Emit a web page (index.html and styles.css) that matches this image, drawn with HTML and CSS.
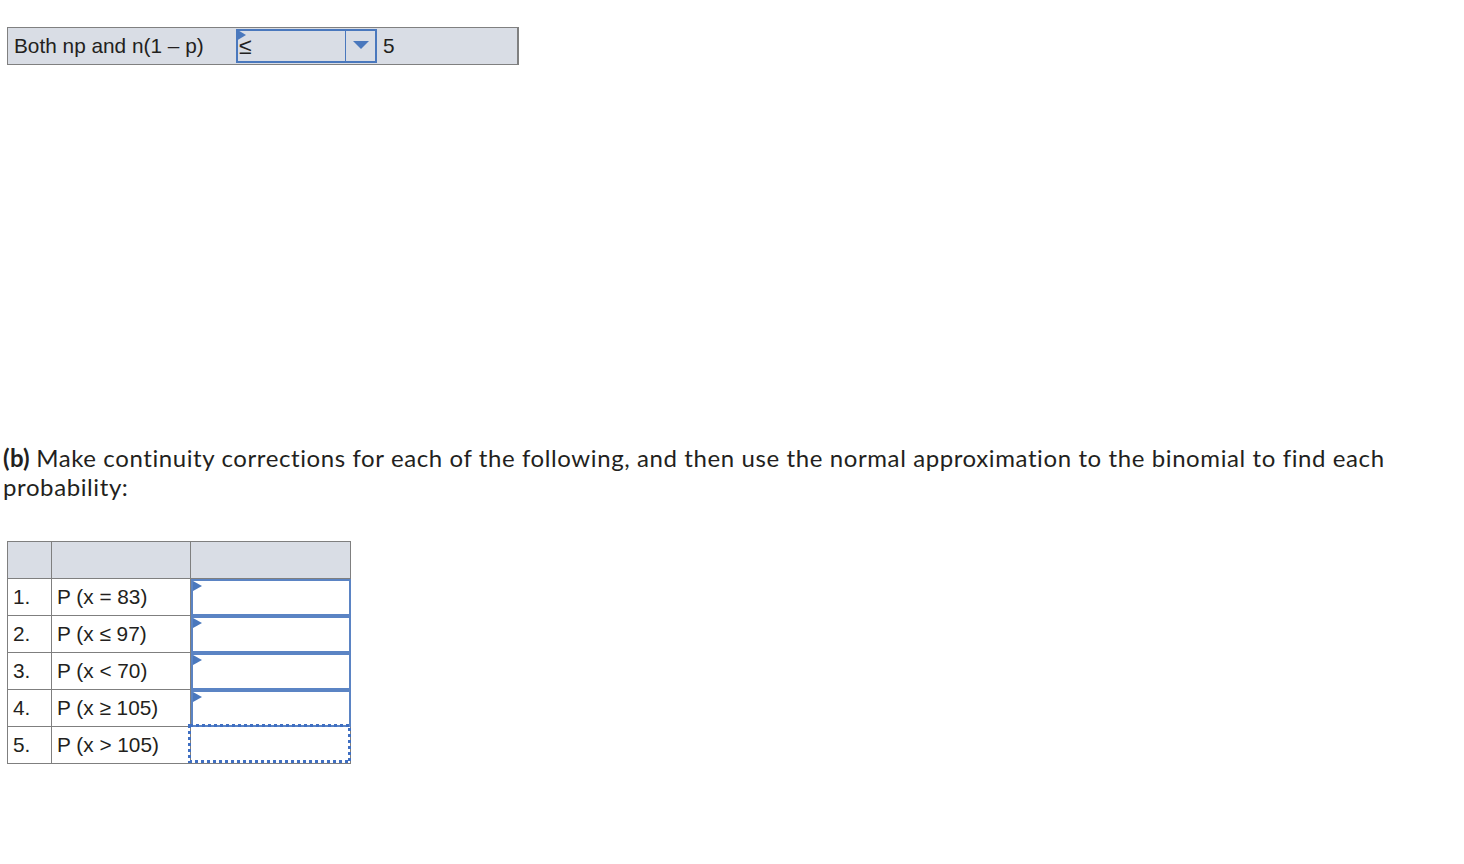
FILE: index.html
```html
<!DOCTYPE html>
<html>
<head>
<meta charset="utf-8">
<link rel="stylesheet" href="styles.css">
</head>
<body>
<div class="page">
  <div class="cond-row">
    <div class="cond-label">Both np and n(1 – p)</div>
    <div class="cond-select">
      <span class="flag"></span>
      <span class="sel-value">≤</span>
      <span class="sel-btn"><span class="caret"></span></span>
    </div>
    <div class="cond-value">5</div>
  </div>

  <p class="question"><b>(b) </b>Make continuity corrections for each of the following, and then use the normal approximation to the binomial to find each probability:</p>

  <table class="prob-table">
    <colgroup>
      <col class="c-num"><col class="c-expr"><col class="c-ans">
    </colgroup>
    <thead>
      <tr><th></th><th></th><th></th></tr>
    </thead>
    <tbody>
      <tr><td>1.</td><td>P (x = 83)</td><td class="ans"><div class="input"><span class="flag"></span></div></td></tr>
      <tr><td>2.</td><td>P (x ≤ 97)</td><td class="ans"><div class="input"><span class="flag"></span></div></td></tr>
      <tr><td>3.</td><td>P (x &lt; 70)</td><td class="ans"><div class="input"><span class="flag"></span></div></td></tr>
      <tr><td>4.</td><td>P (x ≥ 105)</td><td class="ans"><div class="input"><span class="flag"></span></div></td></tr>
      <tr><td>5.</td><td>P (x &gt; 105)</td><td class="ans"><div class="input dotted"><svg class="dots" width="163" height="39" viewBox="0 0 163 39"><rect x="1.5" y="1.5" width="160" height="36" fill="none" stroke="#3f6fc2" stroke-width="3" stroke-dasharray="3 3" shape-rendering="crispEdges"/></svg></div></td></tr>
    </tbody>
  </table>
</div>
</body>
</html>
```

FILE: styles.css
```css
html, body {
  margin: 0;
  padding: 0;
  background: #fff;
}

.page {
  padding: 27px 0 0 0;
  color: #231f20;
}

.cond-row {
  margin-left: 7px;
  width: 512px;
  height: 38px;
  box-sizing: border-box;
  border: 1px solid #808080;
  border-right-width: 2px;
  background: #d9dde5;
  display: flex;
  align-items: stretch;
  font-family: "Liberation Sans", Arial, sans-serif;
  font-size: 20.8px;
}

.cond-label {
  width: 228px;
  padding-left: 6px;
  box-sizing: border-box;
  display: flex;
  align-items: center;
}

.cond-select {
  position: relative;
  width: 141px;
  margin: 1px 0;
  box-sizing: border-box;
  border: 2px solid #4a78bd;
  display: flex;
  align-items: center;
}

.sel-value {
  flex: 1;
  padding-left: 1px;
  font-size: 23px;
}

.sel-btn {
  width: 29px;
  align-self: stretch;
  border-left: 1px solid #4a78bd;
  display: flex;
  align-items: center;
  justify-content: center;
}

.caret {
  width: 0;
  height: 0;
  border-left: 8px solid transparent;
  border-right: 8px solid transparent;
  border-top: 8px solid #4a78bd;
  margin-top: -2px;
}

.cond-value {
  flex: 1;
  padding-left: 6px;
  display: flex;
  align-items: center;
}

.flag {
  position: absolute;
  left: -2px;
  top: -2px;
  width: 0;
  height: 0;
  border-top: 5px solid transparent;
  border-bottom: 5px solid transparent;
  border-left: 9px solid #4a78bd;
}

.cond-select .flag {
  top: -2px;
  border-top-width: 6px;
  border-bottom-width: 6px;
  border-left-width: 10px;
}

.question {
  width: 1420px;
  margin: 378px 0 0 3px;
  font-family: Lato, "Open Sans", sans-serif;
  font-size: 24px;
  line-height: 29px;
  letter-spacing: 0.6px;
  color: #231f20;
}

.question b {
  font-weight: 700;
  letter-spacing: 0.3px;
}

.prob-table {
  margin: 40px 0 0 7px;
  border-collapse: collapse;
  font-family: "Liberation Sans", Arial, sans-serif;
  font-size: 20.8px;
  color: #231f20;
}

.c-num { width: 44px; }
.c-expr { width: 139px; }
.c-ans { width: 160px; }

.prob-table th,
.prob-table td {
  border: 1px solid #7f7f7f;
  height: 37px;
  padding: 0 0 0 5px;
  box-sizing: border-box;
  text-align: left;
  font-weight: normal;
}

.prob-table th {
  background: #d9dde5;
}

.prob-table td.ans {
  padding: 0;
  position: relative;
}

.input {
  position: absolute;
  left: 0;
  top: 0;
  right: -1px;
  bottom: -1px;
  border: 2px solid #5b84c4;
  background: #fff;
  box-sizing: border-box;
}

.input .flag {
  left: 0;
  top: 0;
  border-top-width: 5px;
  border-bottom-width: 5px;
  border-left-width: 9px;
}

.input.dotted {
  left: -3px;
  top: -3px;
  right: auto;
  bottom: auto;
  width: 163px;
  height: 39px;
  border: none;
  background: transparent;
}

.dots {
  display: block;
}
```
